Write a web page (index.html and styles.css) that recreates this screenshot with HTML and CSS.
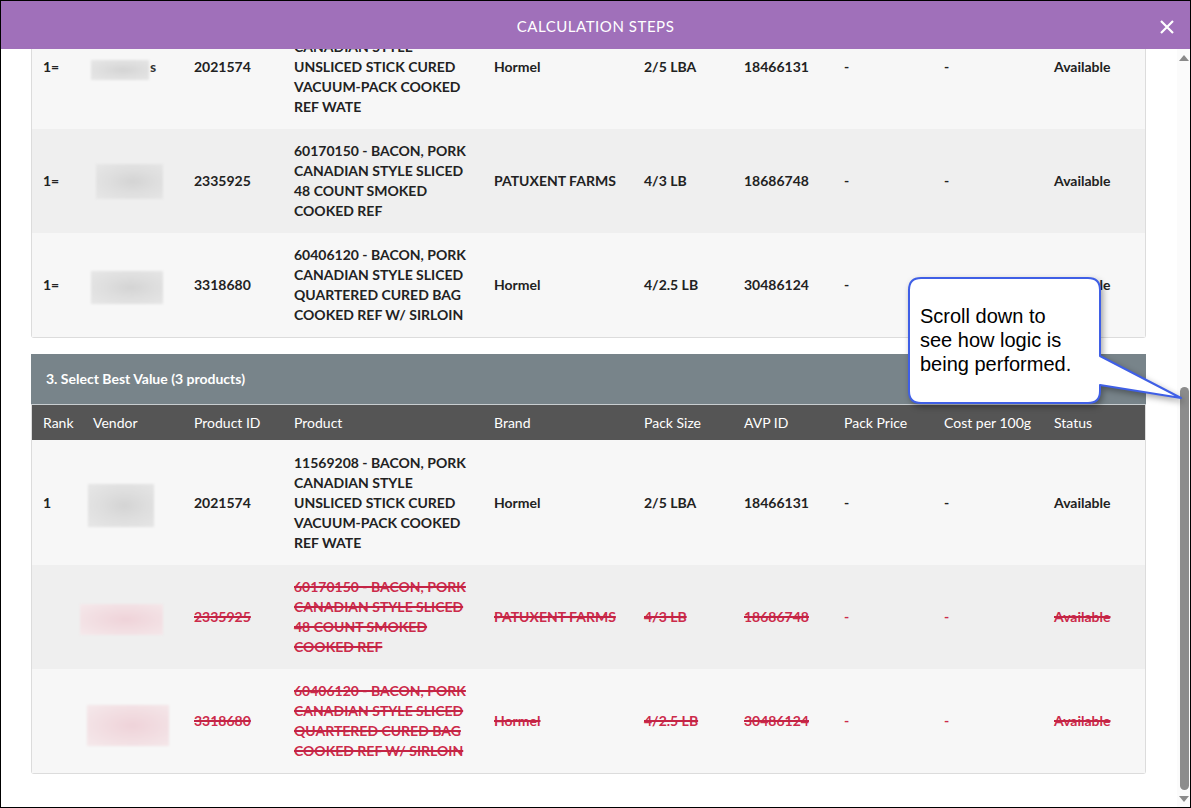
FILE: index.html
```html
<!DOCTYPE html>
<html>
<head>
<meta charset="utf-8">
<link rel="stylesheet" href="styles.css">
</head>
<body>
<div class="frame">
  <header class="modal-head">
    <div class="title">CALCULATION STEPS</div>
    <svg class="close" width="16" height="16" viewBox="0 0 16 16"><path d="M2 2 L14 14 M14 2 L2 14" stroke="#fff" stroke-width="2.2" fill="none"/></svg>
  </header>
  <div class="modal-body">
    <div class="scroll-area">
      <div class="scroll-inner">
        <div class="panel panel-top">
          <div class="row odd tall">
            <div class="c">1=</div>
            <div class="c v"><span class="blur t1"></span><span class="peek">s</span></div>
            <div class="c">2021574</div>
            <div class="c">11569208 - BACON, PORK<br>CANADIAN STYLE<br>UNSLICED STICK CURED<br>VACUUM-PACK COOKED<br>REF WATE</div>
            <div class="c">Hormel</div>
            <div class="c">2/5 LBA</div>
            <div class="c">18466131</div>
            <div class="c">-</div>
            <div class="c">-</div>
            <div class="c">Available</div>
          </div>
          <div class="row even">
            <div class="c">1=</div>
            <div class="c v"><span class="blur t2"></span></div>
            <div class="c">2335925</div>
            <div class="c">60170150 - BACON, PORK<br>CANADIAN STYLE SLICED<br>48 COUNT SMOKED<br>COOKED REF</div>
            <div class="c">PATUXENT FARMS</div>
            <div class="c">4/3 LB</div>
            <div class="c">18686748</div>
            <div class="c">-</div>
            <div class="c">-</div>
            <div class="c">Available</div>
          </div>
          <div class="row odd">
            <div class="c">1=</div>
            <div class="c v"><span class="blur t3"></span></div>
            <div class="c">3318680</div>
            <div class="c">60406120 - BACON, PORK<br>CANADIAN STYLE SLICED<br>QUARTERED CURED BAG<br>COOKED REF W/ SIRLOIN</div>
            <div class="c">Hormel</div>
            <div class="c">4/2.5 LB</div>
            <div class="c">30486124</div>
            <div class="c">-</div>
            <div class="c">-</div>
            <div class="c">Available</div>
          </div>
        </div>

        <div class="panel panel-bottom">
          <div class="section-head">3. Select Best Value (3 products)</div>
          <div class="row col-head">
            <div class="c">Rank</div>
            <div class="c">Vendor</div>
            <div class="c">Product ID</div>
            <div class="c">Product</div>
            <div class="c">Brand</div>
            <div class="c">Pack Size</div>
            <div class="c">AVP ID</div>
            <div class="c">Pack Price</div>
            <div class="c">Cost per 100g</div>
            <div class="c">Status</div>
          </div>
          <div class="row odd tall">
            <div class="c">1</div>
            <div class="c v"><span class="blur b1"></span></div>
            <div class="c">2021574</div>
            <div class="c">11569208 - BACON, PORK<br>CANADIAN STYLE<br>UNSLICED STICK CURED<br>VACUUM-PACK COOKED<br>REF WATE</div>
            <div class="c">Hormel</div>
            <div class="c">2/5 LBA</div>
            <div class="c">18466131</div>
            <div class="c">-</div>
            <div class="c">-</div>
            <div class="c">Available</div>
          </div>
          <div class="row even struck">
            <div class="c"></div>
            <div class="c v"><span class="blur red b2"></span></div>
            <div class="c"><s>2335925</s></div>
            <div class="c"><s>60170150 - BACON, PORK<br>CANADIAN STYLE SLICED<br>48 COUNT SMOKED<br>COOKED REF</s></div>
            <div class="c"><s>PATUXENT FARMS</s></div>
            <div class="c"><s>4/3 LB</s></div>
            <div class="c"><s>18686748</s></div>
            <div class="c dash">-</div>
            <div class="c dash">-</div>
            <div class="c"><s>Available</s></div>
          </div>
          <div class="row odd struck">
            <div class="c"></div>
            <div class="c v"><span class="blur red b3"></span></div>
            <div class="c"><s>3318680</s></div>
            <div class="c"><s>60406120 - BACON, PORK<br>CANADIAN STYLE SLICED<br>QUARTERED CURED BAG<br>COOKED REF W/ SIRLOIN</s></div>
            <div class="c"><s>Hormel</s></div>
            <div class="c"><s>4/2.5 LB</s></div>
            <div class="c"><s>30486124</s></div>
            <div class="c dash">-</div>
            <div class="c dash">-</div>
            <div class="c"><s>Available</s></div>
          </div>
        </div>
      </div>
    </div>
    <div class="scrollbar">
      <div class="arrow up"></div>
      <div class="track"><div class="thumb"></div></div>
      <div class="arrow down"></div>
    </div>

    <div class="callout">
      <svg class="callout-shape" width="290" height="145" viewBox="0 0 290 145">
        <path d="M20 8 H187 Q199 8 199 20 V86 L280 128 L199 115 V121 Q199 133 187 133 H20 Q8 133 8 121 V20 Q8 8 20 8 Z" fill="#fff" stroke="#3f5fe6" stroke-width="2" stroke-linejoin="round"/>
      </svg>
      <div class="callout-text">Scroll down to<br>see how logic is<br>being performed.</div>
    </div>
  </div>
</div>
</body>
</html>
```

FILE: styles.css
```css
* { box-sizing: border-box; }
html, body { margin: 0; padding: 0; background: #fff; }
body { width: 1191px; height: 808px; overflow: hidden; font-family: Lato, "Open Sans", sans-serif; }

.frame {
  width: 1191px;
  height: 808px;
  border: 1px solid #000;
  display: flex;
  flex-direction: column;
  background: #fff;
}

.modal-head {
  position: relative;
  height: 48px;
  flex: none;
  background: #a070ba;
  display: flex;
  align-items: center;
  justify-content: center;
  padding-top: 2px;
}
.title {
  color: #fff;
  font-size: 15px;
  letter-spacing: 0.55px;
  font-weight: 400;
}
.close {
  position: absolute;
  right: 15px;
  top: 18px;
}

.modal-body {
  position: relative;
  flex: 1;
  display: flex;
  min-height: 0;
}
.scroll-area {
  flex: 1;
  overflow: hidden;
  padding: 0 31px 0 30px;
}
.scroll-inner {
  margin-top: -45px;
}

.panel {
  border: 1px solid #dcdcdc;
  border-radius: 3px;
  background: #f7f7f7;
  color: #222;
  font-size: 14px;
  font-weight: 700;
  line-height: 20px;
}
.panel-top { border-top: none; }
.panel-bottom { margin-top: 16px; border-top: none; }

.row {
  display: grid;
  grid-template-columns: 50px 101px 100px 200px 150px 100px 100px 100px 110px 1fr;
  align-items: center;
  padding: 12px 0;
}
.row.tall { padding-top: 13px; }
.row .c { padding-left: 11px; white-space: nowrap; }
.row .c.v { padding-left: 0; display: flex; align-items: center; }
.odd { background: #f7f7f7; }
.even { background: #efefef; }

.section-head {
  height: 51px;
  background: #78848a;
  color: #fff;
  font-size: 14px;
  font-weight: 700;
  padding-left: 15px;
  display: flex;
  align-items: center;
  border-bottom: 1px solid #c9ced1;
  margin: 0 -1px;
}
.row.col-head {
  height: 35px;
  padding: 0;
  background: #555;
  color: #fff;
  font-weight: 400;
  font-size: 14px;
}

.struck { color: #cc2b4b; font-weight: 700; }
.struck s { text-decoration: line-through; text-decoration-color: #c42445; text-decoration-thickness: 1.5px; }
.struck .dash { color: #cc2b4b; }

.blur {
  display: block;
  background: radial-gradient(ellipse at 55% 50%, #d4d4d4 0%, #dedede 45%, #e7e7e7 100%);
  filter: blur(0.8px);
}
.blur.red {
  background: radial-gradient(ellipse at 55% 50%, #efd3d9 0%, #f2dee2 50%, #f5e9eb 100%);
}
.peek { font-weight: 700; margin-left: 1px; color: #333; }
.t1 { width: 58px; height: 20px; margin-left: 9px; margin-top: 6px; }
.t2 { width: 67px; height: 35px; margin-left: 14px; }
.t3 { width: 72px; height: 33px; margin-left: 9px; margin-top: 4px; }
.b1 { width: 66px; height: 43px; margin-left: 6px; margin-top: 5px; }
.b2 { width: 83px; height: 31px; margin-left: -2px; margin-top: 4px; }
.b3 { width: 82px; height: 41px; margin-left: 5px; margin-top: 8px; }

.scrollbar {
  width: 13px;
  flex: none;
  display: flex;
  flex-direction: column;
  align-items: center;
  background: #fbfbfb;
}
.arrow {
  width: 0;
  height: 0;
  border-left: 5px solid transparent;
  border-right: 5px solid transparent;
}
.arrow.up { border-bottom: 6px solid #8a8a8a; margin-top: 6px; }
.arrow.down { border-top: 6px solid #8a8a8a; margin-bottom: 5px; }
.track {
  flex: 1;
  width: 100%;
  display: flex;
  justify-content: center;
  padding-top: 326px;
  padding-bottom: 6px;
}
.thumb {
  width: 9px;
  height: 100%;
  background: #8c8c8c;
  border-radius: 5px;
  margin-left: 2px;
}

.callout {
  position: absolute;
  left: 900px;
  top: 221px;
  width: 290px;
  height: 145px;
}
.callout-shape {
  position: absolute;
  left: 0;
  top: 0;
  filter: drop-shadow(2px 3px 3px rgba(0,0,0,0.35));
}
.callout-text {
  position: absolute;
  left: 19px;
  top: 34px;
  font-family: "Liberation Sans", Arial, sans-serif;
  font-size: 20px;
  line-height: 24px;
  color: #000;
}
```
